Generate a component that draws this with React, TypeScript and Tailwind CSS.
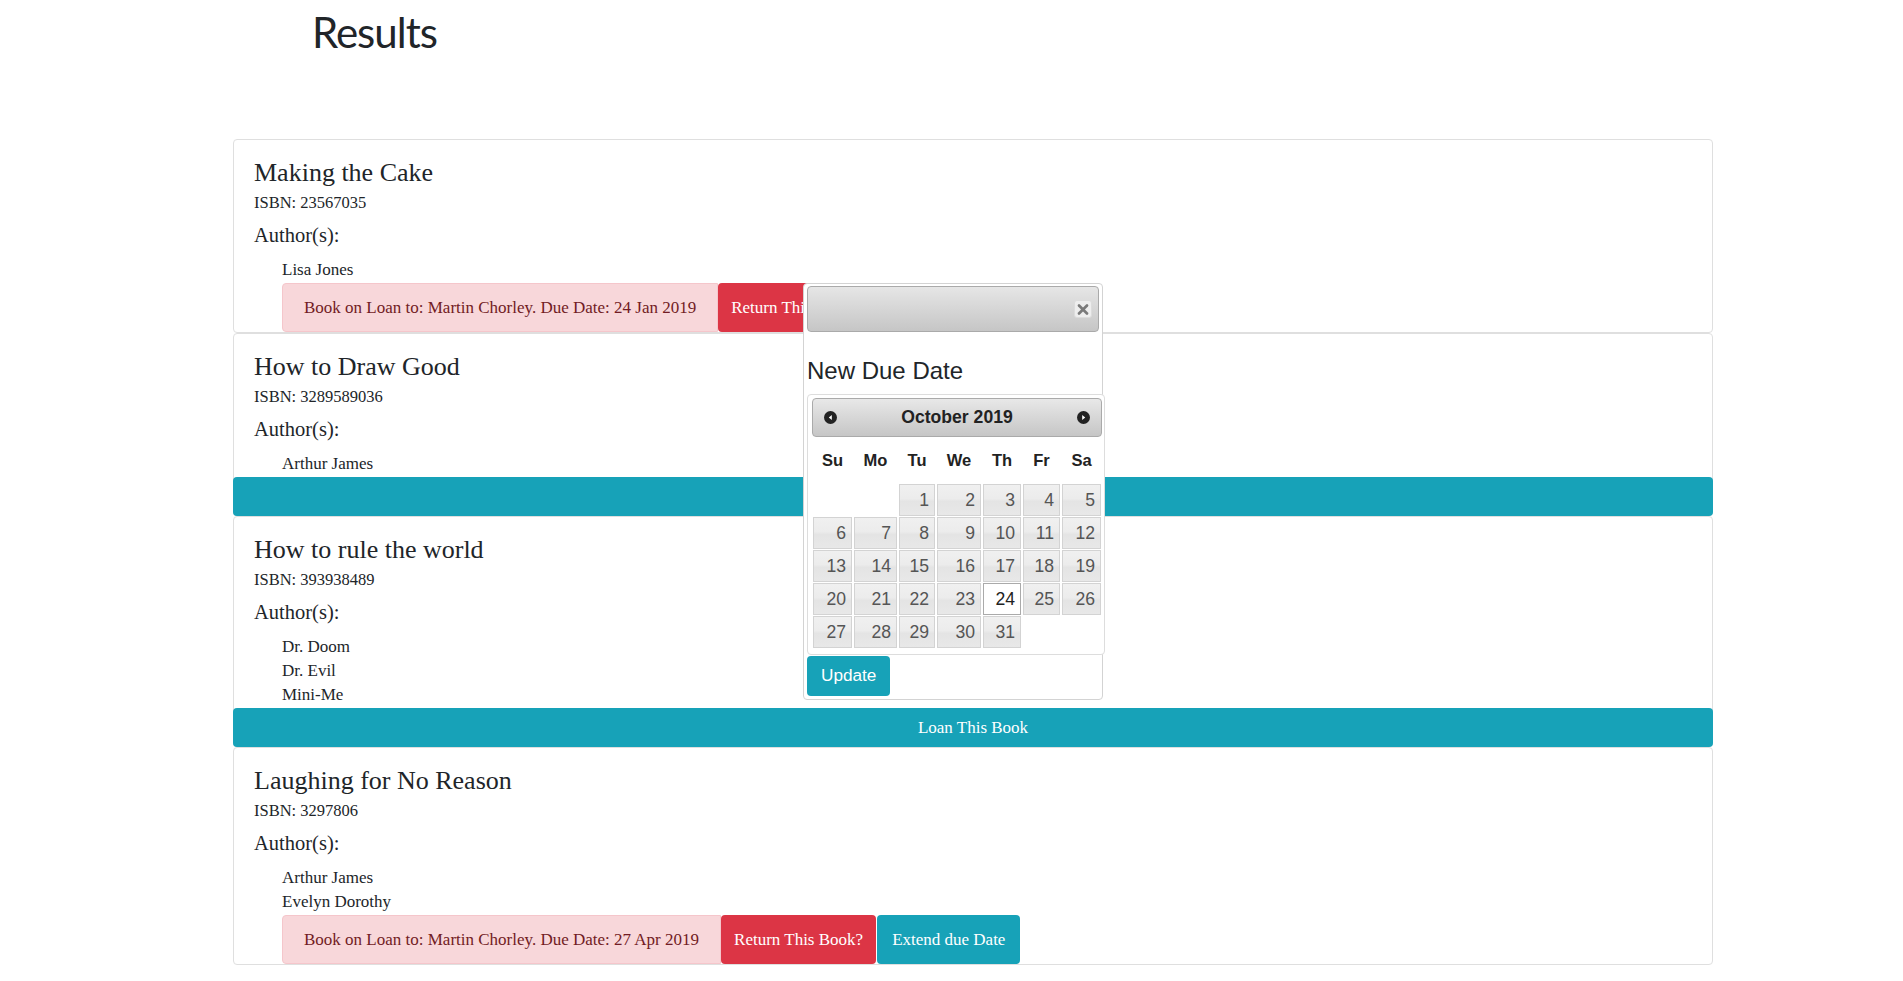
import { X } from "lucide-react";

interface Loan {
  text: string;
}

interface Book {
  title: string;
  isbn: string;
  authors: string[];
  loan?: Loan;
}

const books: Book[] = [
  {
    title: "Making the Cake",
    isbn: "23567035",
    authors: ["Lisa Jones"],
    loan: { text: "Book on Loan to: Martin Chorley. Due Date: 24 Jan 2019" },
  },
  {
    title: "How to Draw Good",
    isbn: "3289589036",
    authors: ["Arthur James"],
  },
  {
    title: "How to rule the world",
    isbn: "393938489",
    authors: ["Dr. Doom", "Dr. Evil", "Mini-Me"],
  },
  {
    title: "Laughing for No Reason",
    isbn: "3297806",
    authors: ["Arthur James", "Evelyn Dorothy"],
    loan: { text: "Book on Loan to: Martin Chorley. Due Date: 27 Apr 2019" },
  },
];

const weekDays = ["Su", "Mo", "Tu", "We", "Th", "Fr", "Sa"];

function BookCard({ book }: { book: Book }) {
  return (
    <div className="flex flex-col rounded-[4px] border border-[#dfdfdf] bg-white text-[#212529]">
      <div className="pl-[20px] pt-[17px]">
        <h4 className="text-[26px] leading-[32px]">{book.title}</h4>
        <p className="mt-[2px] text-[16.5px] leading-[24px]">ISBN: {book.isbn}</p>
        <h5 className="mt-[6px] text-[20.5px] leading-[28px]">Author(s):</h5>
      </div>
      <ul className="mt-[9px] pl-[48px]">
        {book.authors.map((a) => (
          <li key={a} className="text-[17px] leading-[24px]">
            {a}
          </li>
        ))}
        {book.loan ? (
          <li className="mt-[1px] flex h-[49px] text-[17px]">
            <div className="flex items-center rounded-l-[4px] border border-[#f5c6cb] bg-[#f8d7da] px-[21px] text-[#721c24]">
              {book.loan.text}
            </div>
            <button className="flex items-center rounded-[4px] bg-[#dc3545] px-[13px] text-white">
              Return This Book?
            </button>
            <button className="ml-px flex items-center rounded-[4px] bg-[#17a2b8] px-[15px] text-white">
              Extend due Date
            </button>
          </li>
        ) : null}
      </ul>
      {book.loan ? null : (
        <button className="-mx-px -mb-px mt-[1px] h-[39px] rounded-[4px] bg-[#17a2b8] text-[17px] text-white">
          Loan This Book
        </button>
      )}
    </div>
  );
}

function NavArrow({ dir }: { dir: "prev" | "next" }) {
  return (
    <svg width="13" height="13" viewBox="0 0 13 13">
      <circle cx="6.5" cy="6.5" r="6.5" fill="#222" />
      {dir === "prev" ? (
        <path d="M7.8 4 L4.8 6.5 L7.8 9 Z" fill="#fff" />
      ) : (
        <path d="M5.2 4 L8.2 6.5 L5.2 9 Z" fill="#fff" />
      )}
    </svg>
  );
}

function DatePicker() {
  const cells: (number | null)[] = [null, null];
  for (let d = 1; d <= 31; d++) cells.push(d);

  return (
    <div className="w-[298px] rounded-[4px] border border-[#dddddd] bg-white pb-[6px] pl-[4px] pr-[2px] pt-[3px] font-['Liberation_Sans',Arial,sans-serif]">
      <div className="flex h-[39px] items-center justify-between rounded-[4px] border border-[#aaaaaa] bg-gradient-to-b from-[#e8e8e8] to-[#c6c6c6] px-[11px]">
        <NavArrow dir="prev" />
        <span className="text-[17.6px] font-bold text-[#222222]">October 2019</span>
        <NavArrow dir="next" />
      </div>
      <div className="ml-px grid h-[47px] grid-cols-[39px_43px_36px_44px_38px_37px_39px] items-center gap-x-[2px]">
        {weekDays.map((w) => (
          <span key={w} className="text-center text-[16.5px] font-bold text-[#222222]">
            {w}
          </span>
        ))}
      </div>
      <div className="ml-px grid grid-cols-[39px_43px_36px_44px_38px_37px_39px] gap-x-[2px] gap-y-[1px]">
        {cells.map((d, i) =>
          d === null ? (
            <span key={`e${i}`} className="h-[32px]" />
          ) : d === 24 ? (
            <span
              key={d}
              className="flex h-[32px] items-center justify-end border border-[#aaaaaa] bg-white pr-[5px] text-[17.6px] text-[#212121]"
            >
              {d}
            </span>
          ) : (
            <span
              key={d}
              className="flex h-[32px] items-center justify-end border border-[#d3d3d3] bg-[linear-gradient(to_bottom,#f0f0f0_0%,#ececec_45%,#e4e4e4_55%,#e8e8e8_100%)] pr-[5px] text-[17.6px] text-[#555555]"
            >
              {d}
            </span>
          ),
        )}
      </div>
    </div>
  );
}

function DueDateDialog() {
  return (
    <div className="absolute left-[803px] top-[283px] h-[417px] w-[300px] rounded-[4px] border border-[#d3d3d3] bg-white px-[3px] pt-[2px] font-['Liberation_Sans',Arial,sans-serif]">
      <div className="flex h-[46px] items-center justify-end rounded-[4px] border border-[#aaaaaa] bg-gradient-to-b from-[#e6e6e6] to-[#c6c6c6] pr-[6px]">
        <button className="flex h-[18px] w-[18px] items-center justify-center rounded-[3px] border border-[#dcdcdc] bg-[#eeeeee]">
          <X size={17} strokeWidth={4} color="#7a7a7a" />
        </button>
      </div>
      <h3 className="mt-[25px] text-[24px] leading-[28.8px] text-[#212529]">New Due Date</h3>
      <div className="mt-[8px]">
        <DatePicker />
      </div>
      <button className="mt-px h-[40px] rounded-[4px] bg-[#17a2b8] px-[14px] text-[17.2px] text-white">
        Update
      </button>
    </div>
  );
}

export default function App() {
  return (
    <div className="relative min-h-screen bg-white font-['Liberation_Serif','Times_New_Roman',serif]">
      <h1 className="pl-[312px] pt-[7px] font-['Lato',sans-serif] text-[42px] font-normal leading-[50.4px] tracking-[-1px] text-[#212529]">
        Results
      </h1>
      <div className="ml-[233px] mt-[82px] flex w-[1480px] flex-col">
        {books.map((b) => (
          <BookCard key={b.title} book={b} />
        ))}
      </div>
      <DueDateDialog />
    </div>
  );
}
